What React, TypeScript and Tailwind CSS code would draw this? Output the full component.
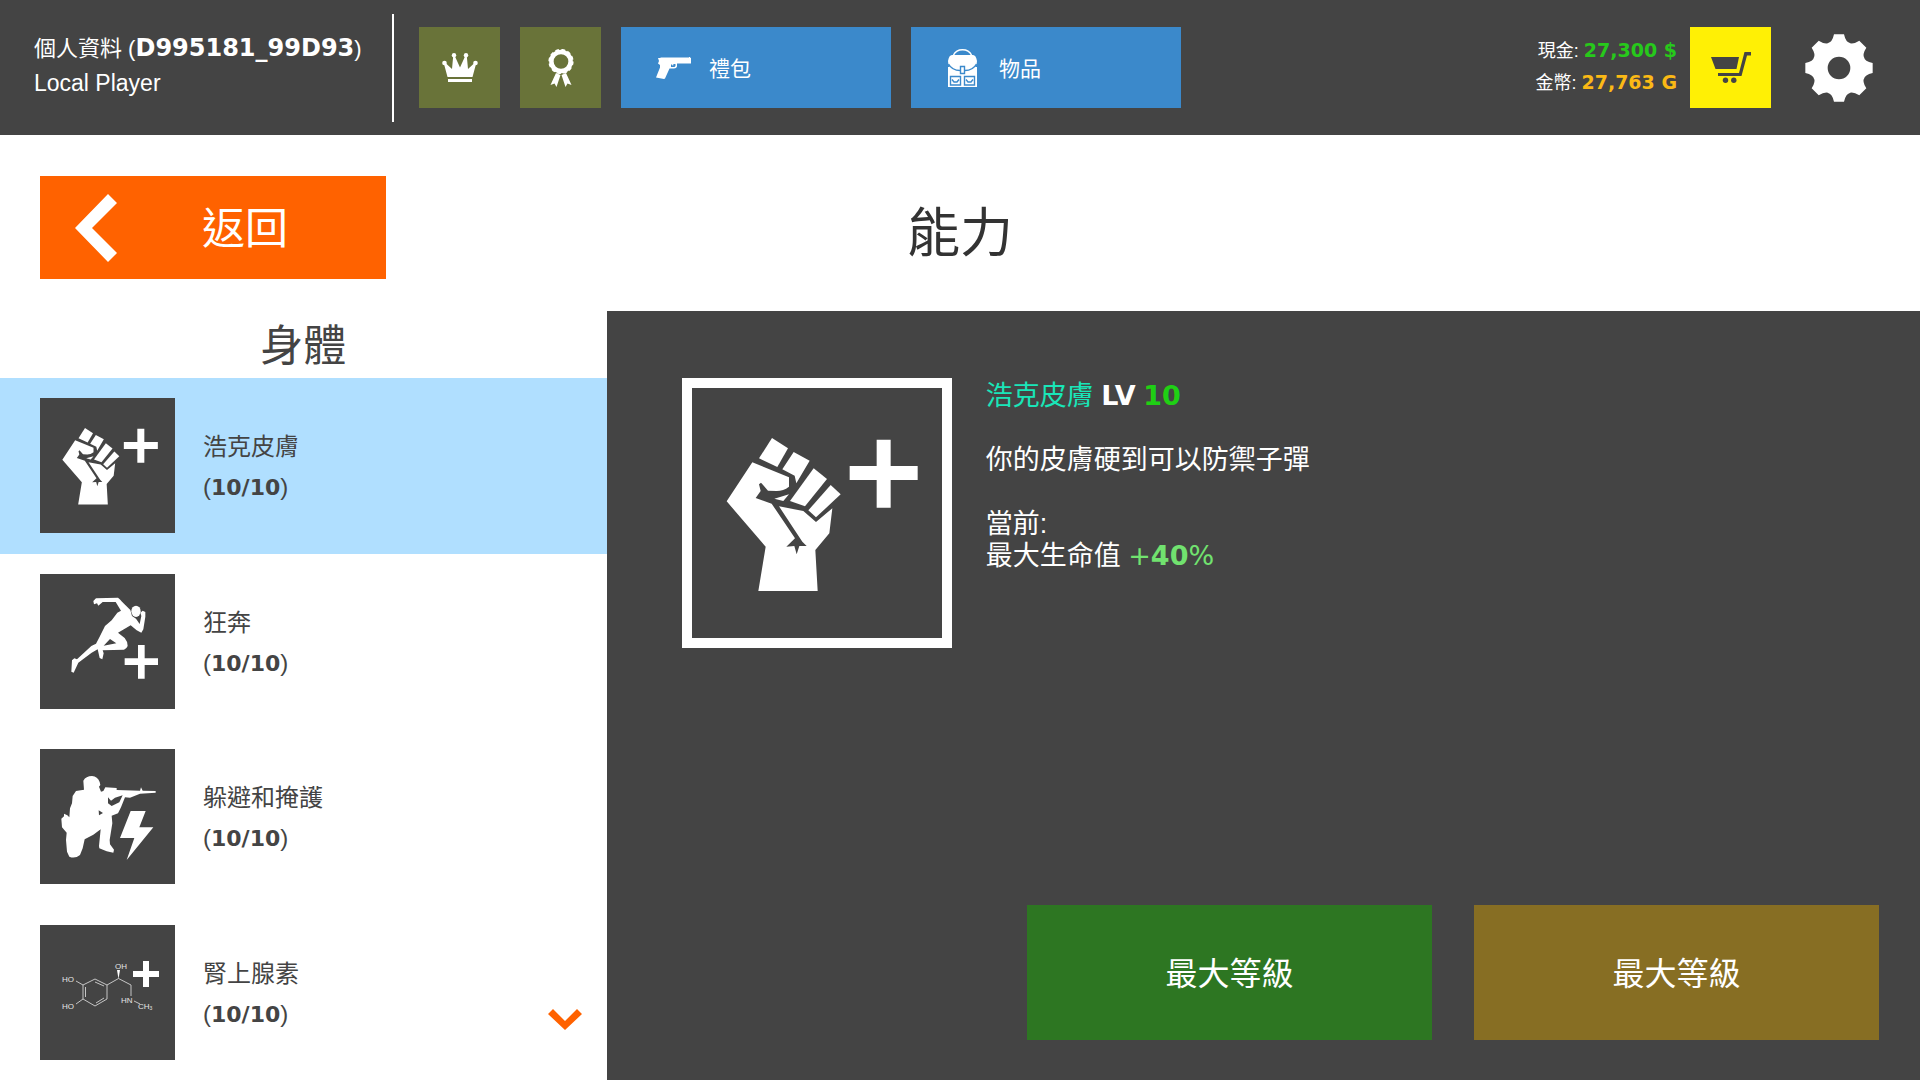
import React, { useState } from "react";

const PlusShape = ({ d }: { d: string }) => <path d={d} fill="#fff" />;

function FistIcon() {
  return (
    <svg viewBox="36 39 810 810" className="size-full" fill="#fff">
      <path d="M306 219 354 250 322 306 267 280Z" />
      <path d="M371 261 419 287 379 355 374 332 337 313Z" />
      <path d="M431 310 471 342 405 424 360 408Z" />
      <path d="M482 360 512 388 438 457 415 436Z" />
      <path d="M247 292 357 337V365Q340 378 320 378L294 377 273 353 267 358 272 378 257 399 305 416 375 520 349 545 373 543 380 568 388 543 410 543 397 530 327 424 400 438 438 471 487 430 478 505 436 555 443 678H265L287 545 170 409Z" />
      <path d="M313 401 357 388 340 408Z" />
      <PlusShape d="M539 303h81v-79h42v79h81v42h-81v83h-42v-83h-81z" />
    </svg>
  );
}

function RunnerIcon() {
  return (
    <svg viewBox="30 42 405 405" className="size-full" fill="#fff">
      <path
        fillRule="evenodd"
        d="M190 123 198 115 264 113Q270 117 276 125L301 150 306 168 318 176 329 192 334 168 331 158 338 152 346 156 346 170 340 208 334 218 320 211 302 196 264 218 284 234Q294 246 293 258 290 266 282 269L218 271 221 280 217 298 209 294 203 268 185 278 145 308 131 338 124 335 126 301 133 295 141 298 184 258 198 251 207 234 225 198 245 181 262 158 273 152 257 126 218 126 205 137 201 130 192 133ZM240 237 259 250 221 257Z"
      />
      <ellipse cx="318" cy="154" rx="14" ry="17" />
      <PlusShape d="M284 295h40v-40h20v40h40v20h-40v41h-20v-41h-40z" />
    </svg>
  );
}

function SoldierIcon() {
  return (
    <svg viewBox="30 27 405 405" className="size-full" fill="#fff">
      <path
        fillRule="evenodd"
        d="M160 122Q168 108 186 108 203 109 209 126L211 135 207 140 213 155 220 153 226 142 260 144 260 150 330 152 333 142 338 152 377 153V158L330 161 300 173 285 172 273 202 264 220 245 227 247 250 239 300 240 313 252 329 250 338 230 334 208 325 207 318 212 268 190 284 164 298 158 325 150 345Q135 357 118 350L111 335 108 300 110 278 96 262 94 236 102 229 102 221 112 226 118 232 120 205 126 190 128 168 138 153 162 149ZM234 172 243 182 255 173 278 166 268 187 245 198 234 190ZM206 211 219 219 207 226Z"
      />
      <path d="M302 213H347L328 262H370L290 360 313 294H270Z" />
    </svg>
  );
}

function MoleculeIcon() {
  return (
    <svg viewBox="0 0 135 135" className="size-full">
      <g fill="none" stroke="#d4d4d4" strokeWidth="0.9">
        <path d="M55 54 67 60V74L55 81 43 74V60ZM55 57 64 61M64 73 56 78M45.500 62V72" />
        <path d="M36 56 43 60M36 79 43 74M67 60 78.500 53.500 91 60V71M94 76 100 79" />
      </g>
      <path d="M78.500 54 77 45H80Z" fill="#fff" />
      <g
        fill="#e5e5e5"
        fontSize="8"
        fontFamily="'Liberation Sans', sans-serif"
      >
        <text x="22" y="57">HO</text>
        <text x="22" y="84">HO</text>
        <text x="75" y="44">OH</text>
        <text x="81" y="78">HN</text>
        <text x="98" y="84">
          CH<tspan fontSize="5" dy="1">3</tspan>
        </text>
      </g>
      <PlusShape d="M93 46h10v-10h6v10h10v6h-10v10h-6v-10h-10z" />
    </svg>
  );
}

function CrownIcon() {
  return (
    <svg viewBox="0 0 36 29" className="w-9" fill="#fff">
      <circle cx="2.500" cy="10" r="2.300" />
      <circle cx="12" cy="2.300" r="2.200" />
      <circle cx="24" cy="2.300" r="2.200" />
      <circle cx="33.500" cy="10" r="2.300" />
      <path d="M2 11 3.500 10 10 16 11.200 3H12.800L18 14.500 23.200 3H24.800L26 16 32.500 10 34 11 30.500 24H5.500ZM6 26H30V29H6Z" />
    </svg>
  );
}

function MedalIcon() {
  return (
    <svg viewBox="0 0 26 38" className="w-[26px]">
      <circle cx="13" cy="12.500" r="9.600" fill="none" stroke="#fff" strokeWidth="4.500" />
      <circle
        cx="13"
        cy="12.500"
        r="11.800"
        fill="none"
        stroke="#fff"
        strokeWidth="1.600"
        strokeDasharray="3.700 2.480"
      />
      <path d="M8 24 12.500 26 8.500 38 6.500 34.500 2.500 36ZM18 24 13.500 26 17.500 38 19.500 34.500 23.500 36Z" fill="#fff" />
    </svg>
  );
}

function PistolIcon() {
  return (
    <svg viewBox="0 0 35 22" className="w-[35px]" fill="#fff">
      <path
        fillRule="evenodd"
        d="M2 1H4L5 .5H33V0H34V.5L35 1V6.500H21V9.500Q20.500 11.500 18 11.500H13.500L9 21.500 8 22 0 20.500 4 10.500V8L2 6.500 3 4ZM15 7.500V10H18.500L19.500 9V7H17.500L17 9 16 7.500Z"
      />
    </svg>
  );
}

function BackpackIcon() {
  return (
    <svg viewBox="0 0 29 38" className="w-[29px]" fill="none">
      <path d="M5.500 6Q8 .8 14.500 .8T23.500 6" stroke="#fff" strokeWidth="1.500" />
      <path d="M0 18H29V38H0ZM0 12Q1 6 4 6H25Q28 6 29 12Q29 18 24 20.500H5Q0 18 0 12Z" fill="#fff" />
      <path
        d="M.5 15Q4 21.500 12 21.500M28.500 15Q25 21.500 17 21.500M12.500 17.500H16.500V24.500H12.500ZM2.500 27.500H12.500V36H2.500ZM16.500 27.500H26.500V36H16.500ZM4 30.500 6 33H9L11 30.500M18 30.500 20 33H23L25 30.500"
        stroke="#3b89cb"
        strokeWidth="1.400"
      />
    </svg>
  );
}

function CartIcon() {
  return (
    <svg viewBox="0 0 40 31" className="w-10" fill="#444">
      <path d="M0 5H28L25.500 17H4.500Z" />
      <path d="M33.500 0H40V3.500H36L30.500 24H7V21H28Z" />
      <circle cx="14.500" cy="28.200" r="2.700" />
      <circle cx="22.800" cy="28.200" r="2.700" />
    </svg>
  );
}

const toothAngles = [0, 45, 90, 135, 180, 225, 270, 315];

function GearIcon() {
  return (
    <svg viewBox="-102 -102 204 204" className="size-[68px]">
      {toothAngles.map((angle) => (
        <path
          key={angle}
          d="M-15-101H15Q20-77 34-74L0-50-34-74Q-20-77-15-101Z"
          fill="#fff"
          transform={`rotate(${angle})`}
        />
      ))}
      <circle r="56" fill="none" stroke="#fff" strokeWidth="44" />
    </svg>
  );
}

const skills = [
  { id: "skin", name: "浩克皮膚", level: "10/10", icon: <FistIcon /> },
  { id: "sprint", name: "狂奔", level: "10/10", icon: <RunnerIcon /> },
  { id: "cover", name: "躲避和掩護", level: "10/10", icon: <SoldierIcon /> },
  { id: "adrenaline", name: "腎上腺素", level: "10/10", icon: <MoleculeIcon /> },
];

// 數字用較寬的字體
const Wide = ({
  className = "",
  children,
}: {
  className?: string;
  children: React.ReactNode;
}) => (
  <span
    className={`font-[family-name:'DejaVu_Sans','Noto_Sans_CJK_TC',sans-serif] ${className}`}
  >
    {children}
  </span>
);

export default function App() {
  const [selected, setSelected] = useState("skin");

  return (
    <div className="flex min-h-screen flex-col bg-white font-[family-name:'Liberation_Sans','Noto_Sans_CJK_TC',sans-serif] text-[#444]">
      {/* 頂部列 */}
      <header className="flex h-[135px] items-center bg-[#444] pr-[47px] pl-[34px] text-white">
        <div className="w-[358px] shrink-0 pb-1 whitespace-nowrap">
          <div className="text-[22px] leading-[34px]">
            個人資料 (<Wide className="text-2xl leading-[34px] font-bold">D995181_99D93</Wide>)
          </div>
          <div className="text-[23px] leading-[34px]">Local Player</div>
        </div>
        <div className="h-[108px] w-0.5 bg-white" />
        <nav className="ml-[25px] flex gap-5">
          <button aria-label="排名" className="flex size-[81px] items-center justify-center bg-[#697339]">
            <CrownIcon />
          </button>
          <button aria-label="成就" className="flex size-[81px] items-center justify-center bg-[#697339]">
            <MedalIcon />
          </button>
          <button className="flex h-[81px] w-[270px] items-center bg-[#3b89cb] pl-[35px] text-[21px]">
            <PistolIcon />
            <span className="ml-[18px] pt-0.5">禮包</span>
          </button>
          <button className="flex h-[81px] w-[270px] items-center bg-[#3b89cb] pl-[37px] text-[21px]">
            <BackpackIcon />
            <span className="ml-[22px] pt-0.5">物品</span>
          </button>
        </nav>
        <div className="ml-auto flex items-center">
          <div className="pb-0.5 text-right text-lg leading-[31px]">
            <div>
              現金: <Wide className="text-[19px] leading-[31px] font-bold text-[#27c91b]">27,300 $</Wide>
            </div>
            <div>
              金幣: <Wide className="text-[19px] leading-[31px] font-bold text-[#fbb915]">27,763 G</Wide>
            </div>
          </div>
          <button aria-label="商店" className="ml-[13px] flex size-[81px] items-center justify-center bg-[#fff005]">
            <CartIcon />
          </button>
          <button aria-label="設定" className="ml-[34px]">
            <GearIcon />
          </button>
        </div>
      </header>

      {/* 標題列 */}
      <div className="grid grid-cols-[1fr_auto_1fr] items-center px-10 pt-[41px] pb-8">
        <button className="flex h-[103px] w-[346px] items-center bg-[#ff6200] pl-[35px] text-white">
          <svg viewBox="0 0 42 68" className="w-[42px]" fill="#fff">
            <path d="M33 0 42 9 17 34 42 59 33 68 0 34Z" />
          </svg>
          <span className="ml-[85px] pt-1 text-[43px]">返回</span>
        </button>
        <h1 className="pt-3 text-[53px] text-[#333]">能力</h1>
      </div>

      <main className="flex flex-1">
        {/* 能力列表 */}
        <aside className="relative flex w-[31.6%] flex-col">
          <h2 className="flex h-[67px] items-center justify-center pt-1 text-[43px]">身體</h2>
          <ul className="flex flex-1 flex-col">
            {skills.map((skill) => (
              <li key={skill.id} className="flex flex-1">
                <button
                  onClick={() => setSelected(skill.id)}
                  className={`flex w-full items-center gap-7 pl-10 text-left text-2xl ${
                    selected === skill.id ? "bg-[#b0dfff]" : "bg-white"
                  }`}
                >
                  <span className="size-[135px] shrink-0 bg-[#444]">{skill.icon}</span>
                  <span className="flex flex-col pt-1 leading-10">
                    <span>{skill.name}</span>
                    <span>
                      (<Wide className="text-[22px] leading-10 font-bold">{skill.level}</Wide>)
                    </span>
                  </span>
                </button>
              </li>
            ))}
          </ul>
          <button aria-label="向下捲動" className="absolute right-[25px] bottom-[50px]">
            <svg viewBox="0 0 34 21" className="w-[34px]" fill="#ff6200">
              <path d="M0 5 5 0 17 12 29 0 34 5 17 21Z" />
            </svg>
          </button>
        </aside>

        {/* 能力詳情 */}
        <section className="flex flex-1 flex-col bg-[#444] pt-[67px] pr-[41px] pb-10 pl-[75px] text-white">
          <div className="flex gap-[34px]">
            <div className="size-[270px] shrink-0 outline-10 -outline-offset-10 outline-white">
              <FistIcon />
            </div>
            <div className="pt-0.5 text-[27px] leading-8">
              <h3>
                <span className="text-[#19e6b8]">浩克皮膚</span>{" "}
                <Wide className="font-bold">LV</Wide>{" "}
                <Wide className="font-bold text-[#1fd014]">10</Wide>
              </h3>
              <p className="mt-8">你的皮膚硬到可以防禦子彈</p>
              <p className="mt-8">當前:</p>
              <p>
                最大生命值{" "}
                <Wide className="text-[#71e26f]">
                  +<b>40</b>%
                </Wide>
              </p>
            </div>
          </div>
          <div className="mt-auto flex justify-end gap-[42px] text-[32px]">
            <button className="h-[135px] w-[405px] bg-[#2d7622] pt-0.5">最大等級</button>
            <button className="h-[135px] w-[405px] bg-[#876e23] pt-0.5">最大等級</button>
          </div>
        </section>
      </main>
    </div>
  );
}
